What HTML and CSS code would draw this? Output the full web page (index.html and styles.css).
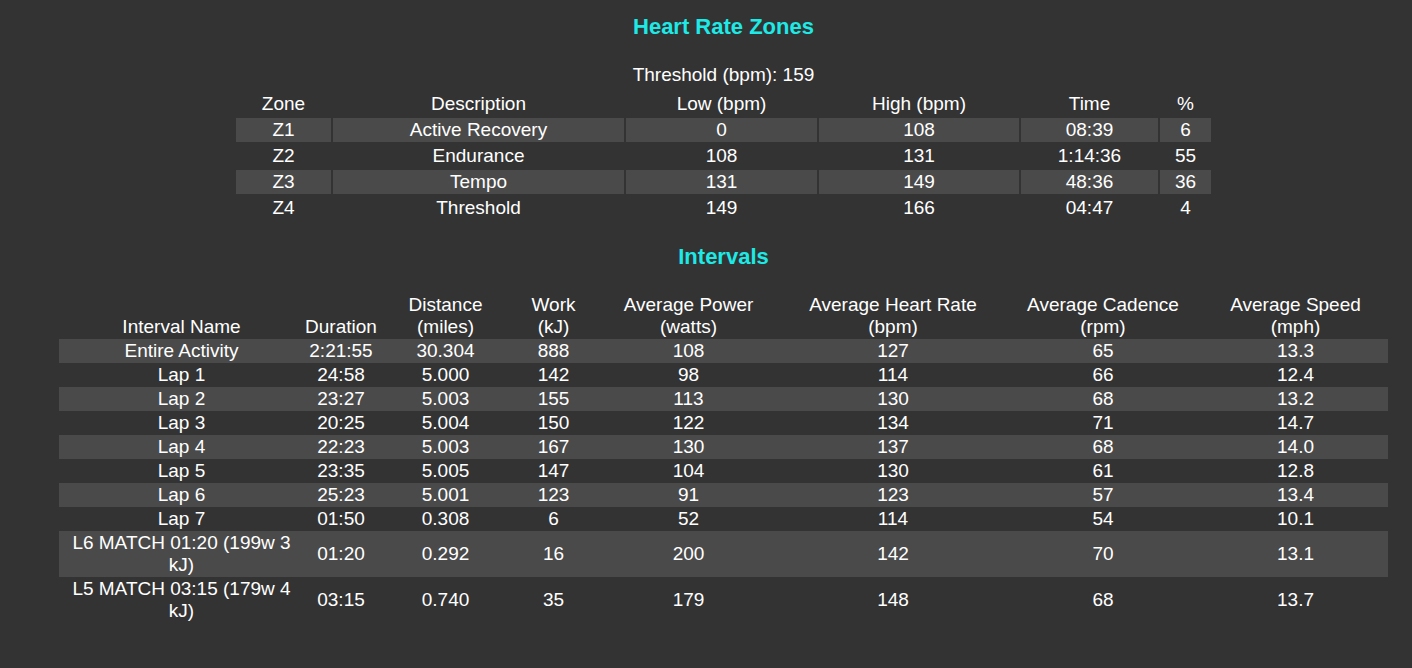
FILE: index.html
```html
<!DOCTYPE html>
<html lang="en">
<head>
<meta charset="utf-8">
<title>Heart Rate Zones</title>
<link rel="stylesheet" href="styles.css">
</head>
<body>
<div class="page">
  <h2 class="section-title first">Heart Rate Zones</h2>
  <div class="threshold">Threshold (bpm): 159</div>
  <table class="zones">
    <colgroup>
      <col class="z-zone"><col class="z-desc"><col class="z-low"><col class="z-high"><col class="z-time"><col class="z-pct">
    </colgroup>
    <thead>
      <tr><th>Zone</th><th>Description</th><th>Low (bpm)</th><th>High (bpm)</th><th>Time</th><th>%</th></tr>
    </thead>
    <tbody>
      <tr class="stripe"><td>Z1</td><td>Active Recovery</td><td>0</td><td>108</td><td>08:39</td><td>6</td></tr>
      <tr><td>Z2</td><td>Endurance</td><td>108</td><td>131</td><td>1:14:36</td><td>55</td></tr>
      <tr class="stripe"><td>Z3</td><td>Tempo</td><td>131</td><td>149</td><td>48:36</td><td>36</td></tr>
      <tr><td>Z4</td><td>Threshold</td><td>149</td><td>166</td><td>04:47</td><td>4</td></tr>
    </tbody>
  </table>

  <h2 class="section-title">Intervals</h2>
  <table class="intervals">
    <colgroup>
      <col class="i-name"><col class="i-dur"><col class="i-dist"><col class="i-work"><col class="i-pow"><col class="i-hr"><col class="i-cad"><col class="i-spd">
    </colgroup>
    <thead>
      <tr>
        <th>Interval Name</th><th>Duration</th><th>Distance<br>(miles)</th><th>Work<br>(kJ)</th>
        <th>Average Power<br>(watts)</th><th>Average Heart Rate<br>(bpm)</th><th>Average Cadence<br>(rpm)</th><th>Average Speed<br>(mph)</th>
      </tr>
    </thead>
    <tbody>
      <tr class="stripe"><td>Entire Activity</td><td>2:21:55</td><td>30.304</td><td>888</td><td>108</td><td>127</td><td>65</td><td>13.3</td></tr>
      <tr><td>Lap 1</td><td>24:58</td><td>5.000</td><td>142</td><td>98</td><td>114</td><td>66</td><td>12.4</td></tr>
      <tr class="stripe"><td>Lap 2</td><td>23:27</td><td>5.003</td><td>155</td><td>113</td><td>130</td><td>68</td><td>13.2</td></tr>
      <tr><td>Lap 3</td><td>20:25</td><td>5.004</td><td>150</td><td>122</td><td>134</td><td>71</td><td>14.7</td></tr>
      <tr class="stripe"><td>Lap 4</td><td>22:23</td><td>5.003</td><td>167</td><td>130</td><td>137</td><td>68</td><td>14.0</td></tr>
      <tr><td>Lap 5</td><td>23:35</td><td>5.005</td><td>147</td><td>104</td><td>130</td><td>61</td><td>12.8</td></tr>
      <tr class="stripe"><td>Lap 6</td><td>25:23</td><td>5.001</td><td>123</td><td>91</td><td>123</td><td>57</td><td>13.4</td></tr>
      <tr><td>Lap 7</td><td>01:50</td><td>0.308</td><td>6</td><td>52</td><td>114</td><td>54</td><td>10.1</td></tr>
      <tr class="stripe"><td>L6 MATCH 01:20 (199w 3 kJ)</td><td>01:20</td><td>0.292</td><td>16</td><td>200</td><td>142</td><td>70</td><td>13.1</td></tr>
      <tr><td>L5 MATCH 03:15 (179w 4 kJ)</td><td>03:15</td><td>0.740</td><td>35</td><td>179</td><td>148</td><td>68</td><td>13.7</td></tr>
    </tbody>
  </table>
</div>
</body>
</html>
```

FILE: styles.css
```css
html, body {
  margin: 0;
  padding: 0;
  background: #333333;
}

body {
  color: #ffffff;
  font-family: "Liberation Sans", Arial, sans-serif;
  font-size: 19px;
  line-height: 22px;
}

.page {
  padding: 14px 8px 0 43px;
}

.section-title {
  margin: 22px 0 24px;
  font-size: 22px;
  line-height: 25px;
  font-weight: bold;
  color: #1de9e6;
  text-align: center;
}

.section-title.first {
  margin-top: 0;
}

.threshold {
  margin-top: 25px;
  margin-bottom: 4px;
  text-align: center;
}

table {
  margin: 0 auto;
  table-layout: fixed;
}

th, td {
  padding: 1px;
  text-align: center;
  font-weight: normal;
  white-space: normal;
}

.stripe td {
  background: #4a4a4a;
}

/* zones */
.zones {
  border-collapse: separate;
  border-spacing: 2px;
  width: 979px;
}

.zones th {
  vertical-align: middle;
}

.z-zone { width: 95px; }
.z-desc { width: 291px; }
.z-low  { width: 191px; }
.z-high { width: 200px; }
.z-time { width: 137px; }
.z-pct  { width: 51px; }

/* intervals */
.intervals {
  border-collapse: separate;
  border-spacing: 0;
  width: 1329px;
}

.intervals th {
  vertical-align: bottom;
}

.intervals td {
  vertical-align: middle;
}

.i-name { width: 245px; }
.i-dur  { width: 74px; }
.i-dist { width: 135px; }
.i-work { width: 81px; }
.i-pow  { width: 189px; }
.i-hr   { width: 220px; }
.i-cad  { width: 200px; }
.i-spd  { width: 185px; }
```
